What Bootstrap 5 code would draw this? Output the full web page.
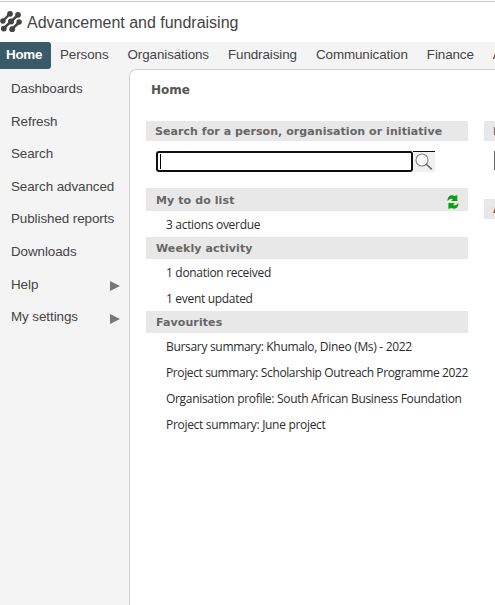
<!DOCTYPE html>
<html lang="en">
<head>
<meta charset="utf-8">
<title>Advancement and fundraising</title>
<link href="https://cdn.jsdelivr.net/npm/bootstrap@5.3.0/dist/css/bootstrap.min.css" rel="stylesheet">
<style>
body{background:#f4f4f4;color:#444;font-family:"Liberation Sans",Arial,sans-serif;font-size:13.4px;line-height:20px;height:605px}
.top-bar{height:42px;border-top:1px solid #fff}
.top-bar::before{content:"";position:absolute;left:0;right:0;top:0;height:1px;background:#ccc}
.app-title{font-size:16px;line-height:20px;margin:2px 0 0 5px;letter-spacing:-.01px}
.main-nav{height:27px;gap:19px}
.main-nav .nav-link{padding:0;color:#444;line-height:26px;letter-spacing:-.09px;flex:none}
.main-nav .nav-link.active{width:51px;height:27px;padding-left:6px;margin-right:-10px;background:#3a5a6a;color:#fff;font-weight:700;border-radius:0 3px 3px 0;letter-spacing:-.25px}
.side{width:129px;padding-top:4px}
.side .nav-link{color:#444;padding:0 9px 0 11px;height:32.6px;line-height:32px;letter-spacing:-.07px}
.panel{border:1px solid #d0d0d0;border-right:0;border-bottom:0;border-radius:7px 0 0 0;height:536px;padding-left:16px}
.panel h1{font:bold 12px/16px "DejaVu Sans",Verdana,sans-serif;color:#555;margin:12px 0 23px 5px}
.main-col{width:322px}
.side-col{width:160px;margin-left:16px}
.band{background:#e8e8e8;color:#666;font:bold 11px/21px "DejaVu Sans",Verdana,sans-serif;height:20px;margin:0;padding:0 9px;letter-spacing:.06px}
.band.tall{height:23px;line-height:23px;padding-left:10px;letter-spacing:.1px}
.band.tall span{padding-top:2px}
.band.mid{height:22px;line-height:24px;padding-left:10px;letter-spacing:.1px}
.search-row{padding:10px 0 0 10px;height:47px}
.search-row.far{height:58px}
.search-box{width:257px;height:21px;border:2px solid #101010;border-radius:3px;padding:1px 2px}
.far .search-box{height:19px;border:1px solid #666;border-radius:0}
.caret{width:1px;height:15px;background:#000}
.search-btn{width:22px;height:21px;background:#f0f0f0;border:0;border-top:1px solid #111}
.entry{font:12px/28px "Open Sans","Segoe UI",sans-serif;color:#2c2c2c;padding-left:20px;height:26px;letter-spacing:-.31px}
.entry.snug{letter-spacing:-.385px}
</style>
</head>
<body class="overflow-hidden">
<header class="top-bar bg-white d-flex align-items-center position-relative">
<svg class="flex-shrink-0" width="22" height="24" viewBox="0 0 22 24" fill="#444">
<path d="M3 11 9.5 4M3.5 18.5 18.5 4.5M12 19 19.5 12" stroke="#444" stroke-width="2.4"/>
<circle cx="2.9" cy="11" r="2.7"/><circle cx="10" cy="3.8" r="2.9"/><circle cx="3.8" cy="18.6" r="2.9"/><circle cx="11" cy="11.6" r="3"/><circle cx="18" cy="4.8" r="2.9"/><circle cx="12.2" cy="19.2" r="2.9"/><circle cx="19.1" cy="12" r="2.7"/>
</svg>
<div class="app-title">Advancement and fundraising</div>
</header>
<nav class="main-nav nav flex-nowrap text-nowrap overflow-hidden">
<a class="nav-link active">Home</a><a class="nav-link">Persons</a><a class="nav-link">Organisations</a><a class="nav-link">Fundraising</a><a class="nav-link">Communication</a><a class="nav-link">Finance</a><a class="nav-link">A</a>
</nav>
<div class="d-flex overflow-hidden">
<nav class="side nav flex-column flex-nowrap flex-shrink-0 text-nowrap">
<a class="nav-link">Dashboards</a><a class="nav-link">Refresh</a><a class="nav-link">Search</a><a class="nav-link">Search advanced</a><a class="nav-link">Published reports</a><a class="nav-link">Downloads</a>
<a class="nav-link d-flex justify-content-between align-items-center">Help<svg class="mt-1" width="10" height="11"><path d="M0 0 10 5 0 10z" fill="#777"/></svg></a>
<a class="nav-link d-flex justify-content-between align-items-center">My settings<svg class="mt-1" width="10" height="11"><path d="M0 0 10 5 0 10z" fill="#777"/></svg></a>
</nav>
<main class="panel bg-white flex-grow-1 overflow-hidden text-nowrap">
<h1>Home</h1>
<div class="d-flex">
<section class="main-col flex-shrink-0">
<h2 class="band">Search for a person, organisation or initiative</h2>
<div class="search-row d-flex">
<div class="search-box bg-white"><div class="caret"></div></div>
<button class="search-btn p-0 d-flex" aria-label="Search"><svg width="22" height="20" viewBox="0 0 22 20" fill="none"><circle cx="9" cy="8" r="6" fill="#f8f8f8" stroke="#888" stroke-width="1.1"/><path d="M5 9.5A4.4 4.4 0 0 0 13 9.5" stroke="#fff" stroke-width="1.8"/><path d="M13 12 18.8 17.3" stroke="#666" stroke-width="1.6"/></svg></button>
</div>
<h2 class="band tall d-flex justify-content-between align-items-center"><span>My to do list</span>
<svg class="mt-1" width="12" height="14" viewBox="0 0 12 14" fill="#0a9f16"><path d="M.5 6C.6 1.5 3.2-1 7.8 1L10.3 0V6H4.2L6 3.9C4.2 3.2 2.4 3.9.5 6zM11.5 8C11.4 12.5 8.8 15 4.2 13L1.4 14V8H7.8L6 10.1C7.8 10.8 9.6 10.1 11.5 8z"/></svg></h2>
<div class="entry">3 actions overdue</div>
<h2 class="band mid">Weekly activity</h2>
<div class="entry">1 donation received</div>
<div class="entry">1 event updated</div>
<h2 class="band mid">Favourites</h2>
<div class="entry">Bursary summary: Khumalo, Dineo (Ms) - 2022</div>
<div class="entry snug">Project summary: Scholarship Outreach Programme 2022</div>
<div class="entry">Organisation profile: South African Business Foundation</div>
<div class="entry">Project summary: June project</div>
</section>
<section class="side-col flex-shrink-0">
<h2 class="band">F</h2>
<div class="search-row far"><div class="search-box bg-white"></div></div>
<h2 class="band">A</h2>
</section>
</div>
</main>
</div>
<script src="https://cdn.jsdelivr.net/npm/bootstrap@5.3.0/dist/js/bootstrap.bundle.min.js"></script>
</body>
</html>
